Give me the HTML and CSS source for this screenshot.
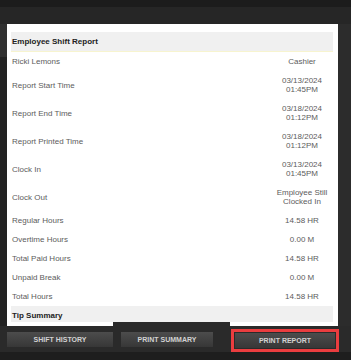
FILE: index.html
```html
<!DOCTYPE html>
<html>
<head>
	<title>Employee Shift Report</title>
	<meta charset="utf-8">
	<meta name="viewport" content="width=device-width, initial-scale=1">
	<link rel="stylesheet" href="styles.css">
</head>
<body>

	<div class="screen">
		<div class="topbar"></div>

		<div class="main">
			<div class="side-left"></div>

			<div class="report">
				<div class="report-body">
					<div class="row row-head">Employee Shift Report</div>
					<div class="row"><span class="label">Ricki Lemons</span><span class="value">Cashier</span></div>
					<div class="row"><span class="label">Report Start Time</span><span class="value">03/13/2024<br>01:45PM</span></div>
					<div class="row"><span class="label">Report End Time</span><span class="value">03/18/2024<br>01:12PM</span></div>
					<div class="row"><span class="label">Report Printed Time</span><span class="value">03/18/2024<br>01:12PM</span></div>
					<div class="row"><span class="label">Clock In</span><span class="value">03/13/2024<br>01:45PM</span></div>
					<div class="row"><span class="label">Clock Out</span><span class="value">Employee Still<br>Clocked In</span></div>
					<div class="row"><span class="label">Regular Hours</span><span class="value">14.58 HR</span></div>
					<div class="row"><span class="label">Overtime Hours</span><span class="value">0.00 M</span></div>
					<div class="row"><span class="label">Total Paid Hours</span><span class="value">14.58 HR</span></div>
					<div class="row"><span class="label">Unpaid Break</span><span class="value">0.00 M</span></div>
					<div class="row"><span class="label">Total Hours</span><span class="value">14.58 HR</span></div>
					<div class="row row-head">Tip Summary</div>
				</div>
			</div>

			<div class="side-right"></div>
		</div>

		<div class="actions">
			<button class="btn btn-history">Shift History</button>
			<button class="btn btn-summary">Print Summary</button>
			<span class="highlight"><button class="btn btn-report">Print Report</button></span>
		</div>

		<div class="bottombar"></div>
	</div>

</body>
</html>
```

FILE: styles.css
```css
*,
*:before,
*:after {
	box-sizing: border-box;
}

body {
	margin: 0;
	background-color: #1e1e1e;
	font-family: "Liberation Sans", Arial, sans-serif;
}

.screen {
	width: 351px;
	height: 360px;
	display: flex;
	flex-direction: column;
	background-color: #262626;
}

.topbar {
	height: 7px;
	background-color: #1c1c1c;
}

.main {
	display: flex;
	padding-top: 17px;
	height: 319px;
}

.side-left {
	width: 7px;
	background: linear-gradient(#303030 0 33px, #222222 33px);
}

.side-right {
	flex: 1;
	background-color: #2c2c2c;
}

.report {
	width: 331px;
	height: 302px;
	background-color: #ffffff;
	padding: 8px 5px 4px 4px;
}

.report-body {
	height: 100%;
	overflow: hidden;
}

.row {
	display: flex;
	justify-content: space-between;
	align-items: center;
	padding: 5px 1px;
	font-size: 8px;
	line-height: 9px;
	color: #5c5c5c;
}

.row-head {
	background-color: #f0f0f0;
	border-bottom: 1px solid #f7f4cf;
	color: #222222;
	font-weight: bold;
}

.value {
	width: 60px;
	text-align: center;
}

.actions {
	position: relative;
	display: flex;
	align-items: center;
	height: 26px;
	padding-left: 7px;
	background-color: #2a2a2a;
}

.actions:before {
	content: "";
	position: absolute;
	left: 113px;
	top: -4px;
	width: 117px;
	height: 4px;
	background-color: #2a2a2a;
}

.btn {
	height: 15px;
	padding: 0;
	border: 0;
	background: linear-gradient(#4c4c4c, #373737);
	color: #d2d2d2;
	font-family: "Liberation Sans", Arial, sans-serif;
	font-size: 7px;
	font-weight: bold;
	text-transform: uppercase;
}

.btn-history {
	width: 106px;
}

.btn-summary {
	width: 92px;
	margin-left: 8px;
}

.highlight {
	display: flex;
	margin-left: 18px;
	margin-top: 3px;
	padding: 1px;
	border: 3px solid #ea3d3f;
	background-color: #2a2a2a;
}

.btn-report {
	width: 100px;
}

.bottombar {
	flex: 1;
	background-color: #1e1e1e;
}
```
